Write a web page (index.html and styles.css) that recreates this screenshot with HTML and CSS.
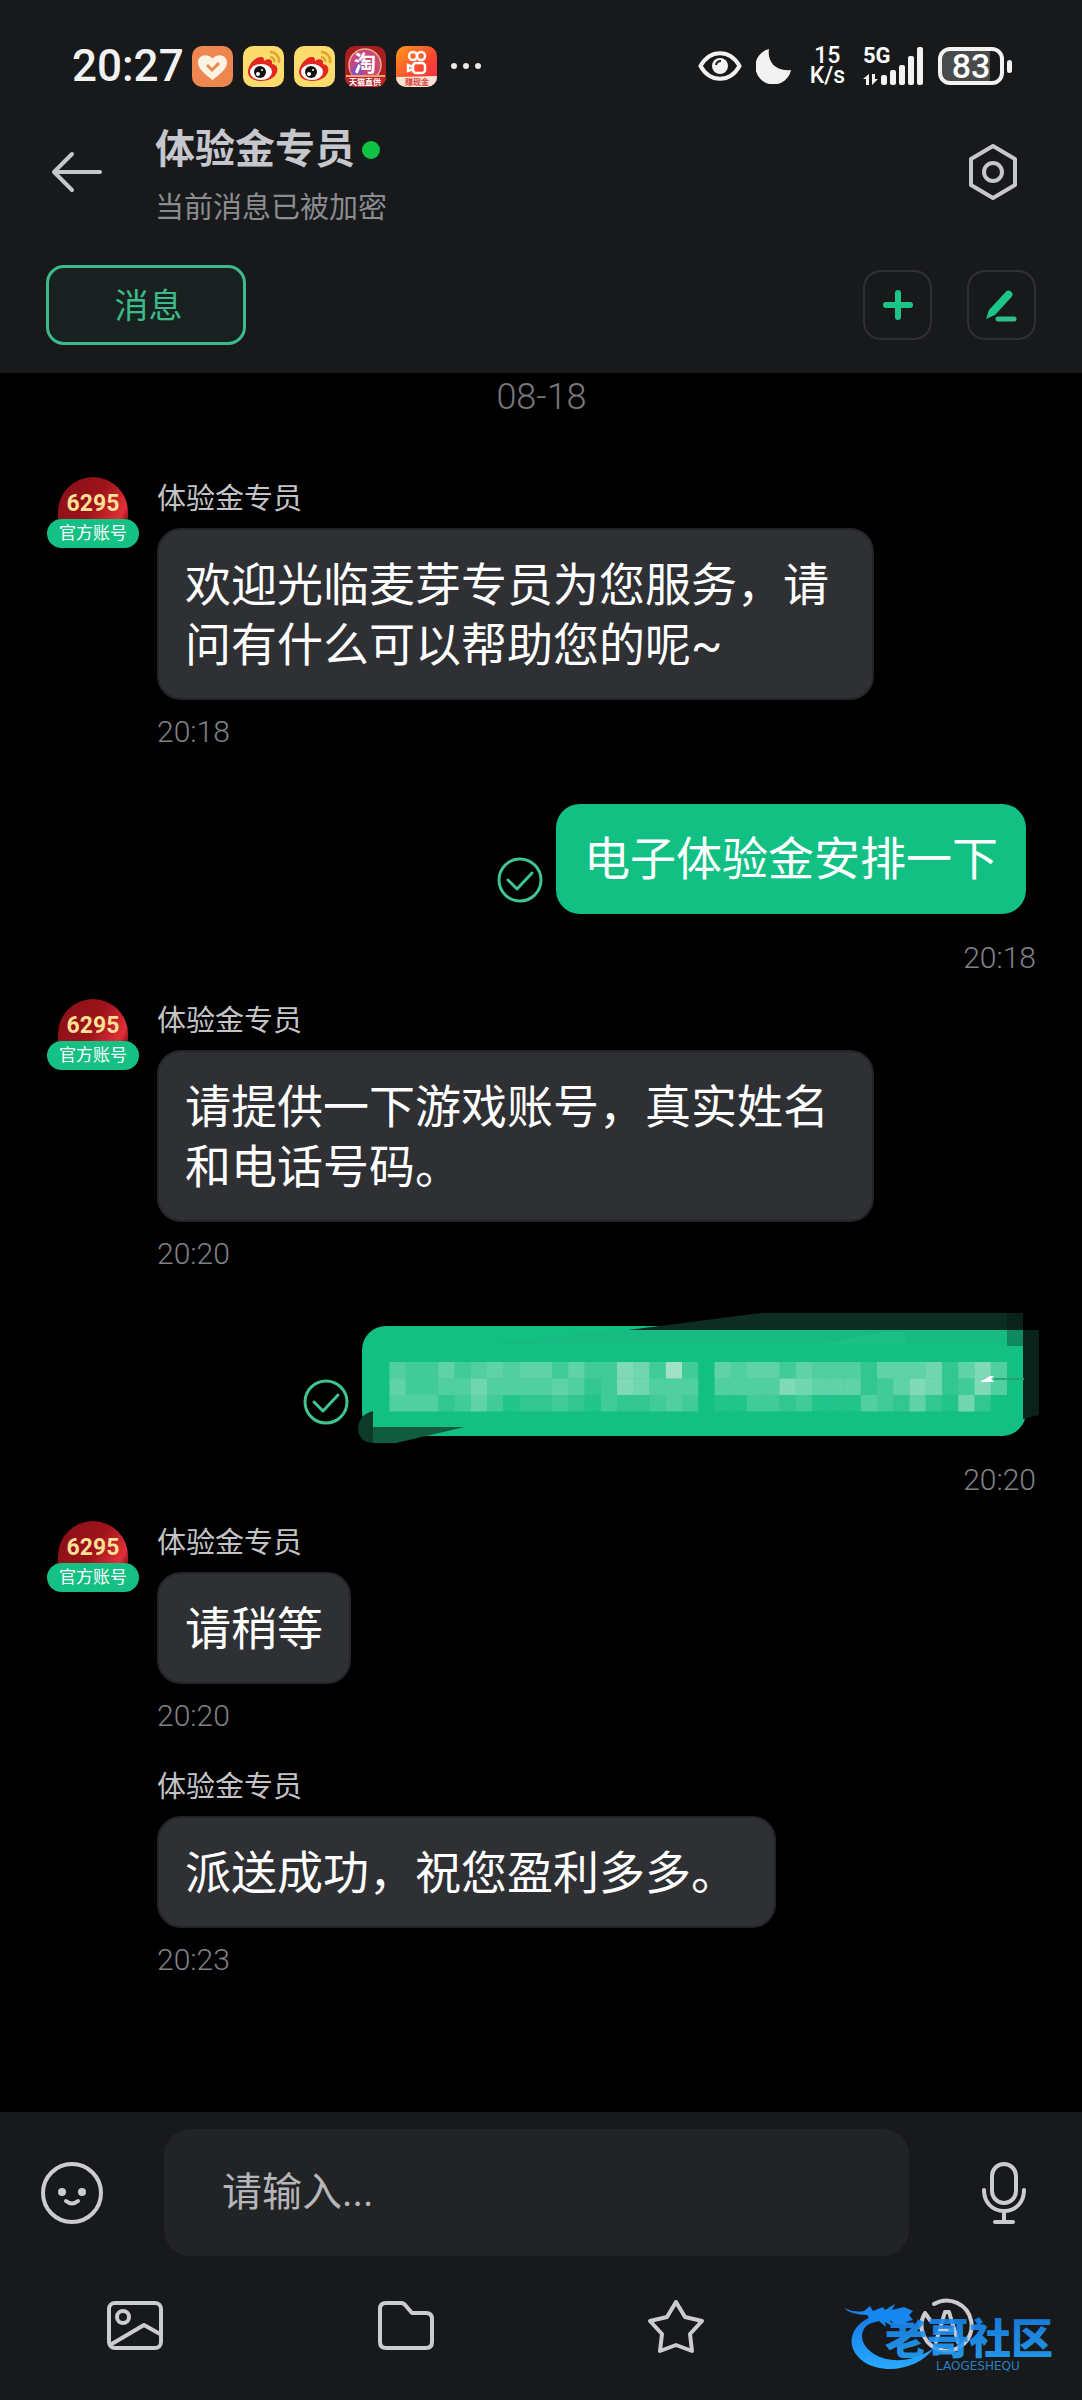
FILE: index.html
```html
<!DOCTYPE html>
<html lang="zh-CN">
<head>
    <meta charset="UTF-8">
    <meta name="viewport" content="width=device-width, initial-scale=1.0">
    <title>体验金专员</title>
    <link rel="stylesheet" href="styles.css">
</head>
<body>
    <header class="header">
        <div class="status-bar">
            <div class="status-left">
                <span class="clock">20:27</span>
                <div class="app-icons">
                    <svg width="41" height="41" viewBox="0 0 41 41">
                        <rect width="41" height="41" rx="10" fill="#ee8650"/>
                        <path d="M20.500 34C13 28 6 23 6 16.500C6 9 15 6.500 20.500 12.500C26 6.500 35 9 35 16.500C35 23 28 28 20.500 34Z" fill="#fdf3e2"/>
                        <path d="M15 19l5 5 7-7" fill="none" stroke="#e58a50" stroke-width="3"/>
                    </svg>
                    <svg width="41" height="41" viewBox="0 0 41 41">
                        <rect width="41" height="41" rx="10" fill="#fbdc6c"/>
                        <path d="M5 26C5 19 12 11 18 11c3 0 3 2 3 4 4-3 9-2 8 3 5 1 6 4 5 8-2 6-9 9-16 9C10 35 5 31 5 26Z" fill="#e3261f"/>
                        <ellipse cx="18" cy="26" rx="11" ry="8" fill="#fff"/>
                        <circle cx="17" cy="26" r="6" fill="#111"/>
                        <circle cx="15" cy="28" r="2" fill="#fff"/>
                        <circle cx="19" cy="24" r="1" fill="#fff"/>
                        <path d="M27 6c6 0 10 5 9 11M27 11c3 0 5 3 4 5" fill="none" stroke="#e2a532" stroke-width="2.500"/>
                    </svg>
                    <svg width="41" height="41" viewBox="0 0 41 41">
                        <rect width="41" height="41" rx="10" fill="#fbdc6c"/>
                        <path d="M5 26C5 19 12 11 18 11c3 0 3 2 3 4 4-3 9-2 8 3 5 1 6 4 5 8-2 6-9 9-16 9C10 35 5 31 5 26Z" fill="#e3261f"/>
                        <ellipse cx="18" cy="26" rx="11" ry="8" fill="#fff"/>
                        <circle cx="17" cy="26" r="6" fill="#111"/>
                        <circle cx="15" cy="28" r="2" fill="#fff"/>
                        <circle cx="19" cy="24" r="1" fill="#fff"/>
                        <path d="M27 6c6 0 10 5 9 11M27 11c3 0 5 3 4 5" fill="none" stroke="#e2a532" stroke-width="2.500"/>
                    </svg>
                    <svg width="41" height="41" viewBox="0 0 41 41">
                        <rect width="41" height="41" rx="10" fill="#a81f22"/>
                        <circle cx="20" cy="19" r="16" fill="#c9487c" stroke="#efb08c" stroke-width="1.500"/>
                        <path d="M5 24a16 16 0 0 0 13 11V12z" fill="#8e4fae"/>
                        <path d="M0 29h41v2a10 10 0 0 1-10 10H10A10 10 0 0 1 0 31z" fill="#b9262a"/>
                        <path d="M1 30h39" stroke="#f0a070" stroke-width="2"/>
                        <text x="20" y="25" class="icon-char">淘</text>
                        <text x="20" y="39" class="icon-tiny">天猫直供</text>
                    </svg>
                    <svg width="41" height="41" viewBox="0 0 41 41">
                        <defs>
                            <linearGradient id="ks" x1="0" y1="0" x2="1" y2="1">
                                <stop offset="0" stop-color="#ff9a1c"/>
                                <stop offset="0.600" stop-color="#fa4332"/>
                                <stop offset="1" stop-color="#ee2c50"/>
                            </linearGradient>
                        </defs>
                        <rect width="41" height="41" rx="10" fill="url(#ks)"/>
                        <g fill="none" stroke="#fff" stroke-width="2.500">
                            <circle cx="17" cy="10" r="4"/>
                            <circle cx="25" cy="10" r="4"/>
                            <rect x="17" y="17" width="12" height="10" rx="3"/>
                            <path d="M17 21l-5-2v6l5-2"/>
                        </g>
                        <path d="M0 31l41-1v1a10 10 0 0 1-10 10H10A10 10 0 0 1 0 31z" fill="#fbe3d3"/>
                        <text x="21" y="39" class="icon-tiny red">赚现金</text>
                    </svg>
                </div>
                <svg width="30" height="8" viewBox="0 0 30 8" fill="#e8e8e8">
                    <circle cx="3" cy="4" r="3"/><circle cx="15" cy="4" r="3"/><circle cx="27" cy="4" r="3"/>
                </svg>
            </div>
            <div class="status-right">
                <svg width="44" height="30" viewBox="0 0 44 30">
                    <path d="M2.500 15C12-2 32-2 41.500 15C32 32 12 32 2.500 15Z" fill="none" stroke="#f2f2f2" stroke-width="4"/>
                    <circle cx="22" cy="15" r="8" fill="#f2f2f2"/>
                    <path d="M18 14a5 5 0 0 1 5-4" fill="none" stroke="#17181a" stroke-width="2"/>
                </svg>
                <svg width="36" height="36" viewBox="0 0 36 36">
                    <path d="M13 1C11 13 19 24 35 22A18 18 0 1 1 13 1Z" fill="#f2f2f2"/>
                </svg>
                <div class="speed"><span>15</span><span>K/s</span></div>
                <div class="signal">
                    <span class="network">5G</span>
                    <svg width="61" height="38" viewBox="0 0 61 38" fill="#f2f2f2">
                        <rect x="18" y="28" width="6" height="10" rx="2"/>
                        <rect x="27" y="23" width="6" height="15" rx="2"/>
                        <rect x="36" y="18" width="6" height="20" rx="2"/>
                        <rect x="45" y="9" width="6" height="29" rx="2"/>
                        <rect x="54" y="0" width="6" height="38" rx="2"/>
                        <path d="M6 27v11H3v-6H0zM9 27v11l6-6h-3v-5z"/>
                    </svg>
                </div>
                <div class="battery"><span>83</span></div>
            </div>
        </div>

        <div class="title-row">
            <button class="icon-btn" aria-label="返回">
                <svg width="52" height="42" viewBox="0 0 52 42" fill="none" stroke="#c6c7cc" stroke-width="4" stroke-linecap="round" stroke-linejoin="round">
                    <path d="M21 3L3 21l18 18M3 21h46"/>
                </svg>
            </button>
            <div class="contact">
                <h1>体验金专员<i class="online"></i></h1>
                <p>当前消息已被加密</p>
            </div>
            <button class="icon-btn" aria-label="设置">
                <svg width="50" height="58" viewBox="0 0 50 58" fill="none" stroke="#c6c7cc" stroke-width="4">
                    <path d="M25 3L47 16v26L25 55L3 42V16Z" stroke-linejoin="round"/>
                    <circle cx="25" cy="29" r="9"/>
                </svg>
            </button>
        </div>

        <div class="tab-row">
            <button class="tab">消息</button>
            <div class="actions">
                <button class="square-btn" aria-label="添加">
                    <svg width="30" height="30" viewBox="0 0 30 30" stroke="#1dc487" stroke-width="6" stroke-linecap="round">
                        <path d="M15 3v24M3 15h24"/>
                    </svg>
                </button>
                <button class="square-btn" aria-label="编辑">
                    <svg width="34" height="34" viewBox="0 0 34 34">
                        <path d="M21 3.500a4 4 0 0 1 6 5L10 27 1 31 4 22Z" fill="#1dc487"/>
                        <path d="M13 31h16" stroke="#2fbd89" stroke-width="5" stroke-linecap="round"/>
                    </svg>
                </button>
            </div>
        </div>
    </header>

    <main class="chat">
        <div class="date">08-18</div>

        <div class="message received">
            <div class="avatar"><div class="face">6295</div><span class="badge">官方账号</span></div>
            <div class="content">
                <div class="name">体验金专员</div>
                <div class="bubble">欢迎光临麦芽专员为您服务，请问有什么可以帮助您的呢~</div>
                <div class="time">20:18</div>
            </div>
        </div>

        <div class="message sent">
            <div class="bubble-row">
                <svg class="check" width="46" height="46" viewBox="0 0 46 46" fill="none" stroke="#3ec592" stroke-width="3">
                    <circle cx="23" cy="23" r="21"/>
                    <path d="M11 23l9 9 15-16" stroke-linecap="round" stroke-linejoin="round"/>
                </svg>
                <div class="bubble">电子体验金安排一下</div>
            </div>
            <div class="time">20:18</div>
        </div>

        <div class="message received">
            <div class="avatar"><div class="face">6295</div><span class="badge">官方账号</span></div>
            <div class="content">
                <div class="name">体验金专员</div>
                <div class="bubble">请提供一下游戏账号，真实姓名和电话号码。</div>
                <div class="time">20:20</div>
            </div>
        </div>

        <div class="message sent">
            <div class="bubble-row">
                <svg class="check" width="46" height="46" viewBox="0 0 46 46" fill="none" stroke="#3ec592" stroke-width="3">
                    <circle cx="23" cy="23" r="21"/>
                    <path d="M11 23l9 9 15-16" stroke-linecap="round" stroke-linejoin="round"/>
                </svg>
                <div class="bubble masked">
                    <svg class="smear" width="700" height="150" viewBox="-10 -20 700 150">
                        <path d="M266 4L399-13H661V4Z" fill="#0c2e22"/>
                        <path d="M645-13h16V4h-16z" fill="#0a231a"/>
                        <path d="M645 4h16v16h-16z" fill="#0f8a60"/>
                        <path d="M661 4h16v85l-16 4z" fill="#09231a"/>
                        <path d="M120 19L250 4h395v15z" fill="#18b57d" opacity="0.500"/>
                        <path d="M461 18l60-12h20l5 12z" fill="#22c58c" opacity="0.500"/>
                        <path d="M-4 101q2-13 15-16v32Q-4 116-4 101z" fill="#0c3c29"/>
                        <path d="M11 101h92l-39 9-30 7H11z" fill="#115b3f"/>
                        <g id="mosaic"></g>
                        <path d="M618 56l10-6h4l-3 3 3 3z" fill="#fff"/>
                        <path d="M632 53h30" stroke="#25a677" stroke-width="2"/>
                    </svg>
                </div>
            </div>
            <div class="time">20:20</div>
        </div>

        <div class="message received">
            <div class="avatar"><div class="face">6295</div><span class="badge">官方账号</span></div>
            <div class="content">
                <div class="name">体验金专员</div>
                <div class="bubble">请稍等</div>
                <div class="time">20:20</div>
            </div>
        </div>

        <div class="message received">
            <div class="avatar"></div>
            <div class="content">
                <div class="name">体验金专员</div>
                <div class="bubble">派送成功，祝您盈利多多。&nbsp;</div>
                <div class="time">20:23</div>
            </div>
        </div>
    </main>

    <footer class="footer">
        <div class="input-row">
            <button class="icon-btn" aria-label="表情">
                <svg width="62" height="62" viewBox="0 0 62 62" fill="none" stroke="#cbccd2" stroke-width="4">
                    <circle cx="31" cy="31" r="29"/>
                    <circle cx="21" cy="30" r="4" fill="#cbccd2" stroke="none"/>
                    <circle cx="41" cy="30" r="4" fill="#cbccd2" stroke="none"/>
                    <path d="M25 39q6 5 12 0" stroke-linecap="round"/>
                </svg>
            </button>
            <input class="message-input" type="text" placeholder="请输入..." aria-label="请输入">
            <button class="icon-btn" aria-label="语音">
                <svg width="46" height="64" viewBox="0 0 46 64" fill="none" stroke="#cbccd2" stroke-width="4" stroke-linecap="round">
                    <rect x="11" y="3" width="24" height="39" rx="12"/>
                    <path d="M3 29c0 12 8 21 20 21s20-9 20-21M23 50v11M14 61h18"/>
                </svg>
            </button>
        </div>
        <div class="toolbar">
            <button class="icon-btn" aria-label="图片">
                <svg width="58" height="56" viewBox="0 0 58 56" fill="none" stroke="#cbccd2" stroke-width="4" stroke-linejoin="round">
                    <rect x="3" y="5" width="52" height="45" rx="6"/>
                    <circle cx="17" cy="19" r="6"/>
                    <path d="M4 47L38 27l16 9"/>
                </svg>
            </button>
            <button class="icon-btn" aria-label="文件">
                <svg width="58" height="56" viewBox="0 0 58 56" fill="none" stroke="#cbccd2" stroke-width="4" stroke-linejoin="round">
                    <path d="M9 5h15q3 0 5 3l6 7h14q6 0 6 6v23q0 6-6 6H9q-6 0-6-6V11q0-6 6-6z"/>
                </svg>
            </button>
            <button class="icon-btn" aria-label="收藏">
                <svg width="58" height="56" viewBox="0 0 58 56" fill="none" stroke="#cbccd2" stroke-width="4" stroke-linejoin="round">
                    <path d="M29 4l9 15 17 4-12 13 2 17-16-6-16 6 2-17L3 23l17-4z"/>
                </svg>
            </button>
            <button class="icon-btn" aria-label="翻译">
                <svg width="58" height="56" viewBox="0 0 58 56" fill="none" stroke="#cbccd2" stroke-width="4" stroke-linecap="round" stroke-linejoin="round">
                    <path d="M16 6A25 25 0 1 1 7 15M3 30Q3 21 7 15L12 22"/>
                    <path d="M18 44l9-30h4l9 30M23 32h12"/>
                </svg>
            </button>
        </div>
        <svg class="watermark" width="230" height="84" viewBox="0 0 230 84">
            <defs>
                <linearGradient id="blue" x1="0" y1="0" x2="0" y2="1">
                    <stop offset="0" stop-color="#1479e6"/>
                    <stop offset="1" stop-color="#28aaff"/>
                </linearGradient>
            </defs>
            <path d="M36 17C8 26 4 50 24 64C46 78 80 70 94 50C74 64 50 66 34 56C16 44 18 26 42 20Z" fill="url(#blue)"/>
            <path d="M4 10q10 5 20 3l6-5 3 5 10-4 2 3 10-6-3 6 12-3 9 4-4 4 4 5-8 2 6 3-16-1-5-4 2 6-7-4 1 5-7-6-14 4q6-8 2-10-16 0-23-7z" fill="#1687ee"/>
            <text x="45" y="56" class="mark-name">老哥社区</text>
            <text x="96" y="72" class="mark-sub">LAOGESHEQU</text>
        </svg>
    </footer>

    <script>
        // white level of each block, 0 = plain bubble colour
        const rows = [
            '43353454553533763930545535444255562574',
            '53344644445423764440444476555235762374',
            '44423531223213223430113323111432521620'
        ];
        const mosaic = document.getElementById('mosaic');
        const size = 16.25;

        rows.forEach((row, y) => {
            [...row].forEach((level, x) => {
                const block = document.createElementNS('http://www.w3.org/2000/svg', 'rect');
                block.setAttribute('x', 27.5 + x * size);
                block.setAttribute('y', 36 + y * 16.5);
                block.setAttribute('width', size);
                block.setAttribute('height', 16.5);
                block.setAttribute('fill', '#d8eee0');
                block.setAttribute('opacity', level * 0.08);
                mosaic.appendChild(block);
            });
        });
    </script>
</body>
</html>
```

FILE: styles.css
```css
* {
    box-sizing: border-box;
}
body {
    margin: 0;
    min-height: 100vh;
    display: flex;
    flex-direction: column;
    background-color: #000;
    color: #fff;
    font-family: Roboto, "Noto Sans CJK SC", sans-serif;
}
svg {
    display: block;
    flex-shrink: 0;
}
button {
    font-family: inherit;
    background: none;
    border: none;
    padding: 0;
    cursor: pointer;
}

/* header */
.header {
    background-color: #18191b;
    padding-bottom: 28px;
}
.status-bar {
    display: flex;
    justify-content: space-between;
    align-items: center;
    height: 110px;
    padding: 22px 70px 0 72px;
}
.status-left, .status-right, .app-icons {
    display: flex;
    align-items: center;
}
.clock {
    font-size: 44px;
    font-weight: 500;
    line-height: 44px;
    color: #f2f2f2;
    margin-right: 8px;
}
.app-icons {
    gap: 10px;
    margin-right: 14px;
}
.icon-char {
    font-size: 22px;
    font-weight: 700;
    fill: #fff;
    text-anchor: middle;
}
.icon-tiny {
    font-size: 8px;
    font-weight: 700;
    fill: #fff;
    text-anchor: middle;
}
.red {
    fill: #d8413a;
}
.status-right {
    gap: 14px;
}
.speed {
    display: flex;
    flex-direction: column;
    align-items: center;
    font-size: 23px;
    font-weight: 500;
    line-height: 20px;
    margin: 0 4px;
}
.signal {
    position: relative;
}
.network {
    position: absolute;
    top: 0;
    left: 0;
    font-size: 22px;
    font-weight: 700;
    line-height: 18px;
}
.battery {
    position: relative;
    width: 66px;
    height: 38px;
    margin-right: 8px;
    border: 4px solid #f2f2f2;
    border-radius: 12px;
    background: linear-gradient(to right, #4a4b4d 83%, #18191b 83%);
    text-align: center;
    font-size: 34px;
    font-weight: 500;
    line-height: 31px;
}
.battery::after {
    content: "";
    position: absolute;
    right: -12px;
    top: 9px;
    width: 5px;
    height: 13px;
    border-radius: 3px;
    background-color: #f2f2f2;
}
.title-row {
    display: flex;
    align-items: center;
    height: 124px;
    padding: 0 64px 0 51px;
}
.contact {
    flex: 1;
    margin-left: 52px;
    padding-top: 3px;
}
.contact h1 {
    display: flex;
    align-items: center;
    gap: 7px;
    margin: 0 0 10px;
    font-size: 40px;
    font-weight: 700;
    line-height: 58px;
    color: #c6c7cc;
}
.online {
    width: 18px;
    height: 18px;
    border-radius: 50%;
    background-color: #0fc144;
}
.contact p {
    margin: 0;
    font-size: 29px;
    line-height: 38px;
    color: #8b8c8f;
}
.tab-row {
    display: flex;
    justify-content: space-between;
    align-items: center;
    padding: 31px 46px 0;
}
.tab {
    width: 200px;
    height: 80px;
    padding: 0 0 3px 5px;
    border: 3px solid #3dba8b;
    border-radius: 18px;
    background-color: #18211f;
    color: #3dba8b;
    font-size: 34px;
}
.actions {
    display: flex;
    gap: 35px;
}
.square-btn {
    display: flex;
    align-items: center;
    justify-content: center;
    width: 69px;
    height: 70px;
    border: 2px solid #2f3033;
    border-radius: 18px;
}

/* messages */
.chat {
    flex: 1;
    padding: 0 46px 60px 47px;
}
.date {
    margin-bottom: 55px;
    text-align: center;
    font-size: 36px;
    font-weight: 300;
    line-height: 48px;
    color: #77787a;
}
.message {
    display: flex;
}
.received + .received {
    margin-top: 28px;
}
.sent {
    flex-direction: column;
    align-items: flex-end;
    margin: 52px 0 20px;
}
.avatar {
    display: flex;
    flex-direction: column;
    align-items: center;
    flex-shrink: 0;
    width: 92px;
    margin-right: 18px;
}
.face {
    width: 70px;
    height: 42px;
    margin-top: 1px;
    border-radius: 35px 35px 0 0;
    background: linear-gradient(120deg, #d88a7a 0%, #8d1118 14%, #9c1319 55%, #e0303a 90%, #8d1118 100%);
    font-size: 23px;
    font-weight: 700;
    line-height: 54px;
    text-align: center;
    color: #ffdf94;
}
.badge {
    width: 92px;
    height: 29px;
    border-radius: 15px;
    background-color: #14c083;
    font-size: 17px;
    line-height: 29px;
    text-align: center;
}
.name {
    padding-top: 2px;
    margin-bottom: 8px;
    font-size: 29px;
    line-height: 42px;
    color: #c4c4c6;
}
.bubble {
    width: fit-content;
    max-width: 717px;
    padding: 25px 26px 23px;
    border: 2px solid #242528;
    border-radius: 24px;
    background-color: #2f3034;
    font-size: 46px;
    line-height: 60px;
}
.time {
    margin-top: 12px;
    font-size: 30px;
    font-weight: 300;
    line-height: 40px;
    color: #808185;
}
.bubble-row {
    display: flex;
    align-items: flex-end;
    gap: 13px;
    padding-right: 10px;
}
.check {
    margin-bottom: 11px;
}
.sent .bubble {
    padding: 25px 28px;
    border: none;
    background-color: #12c084;
}
.sent .time {
    margin-top: 24px;
}
.sent .masked {
    position: relative;
    width: 664px;
    height: 110px;
}
.smear {
    position: absolute;
    top: -20px;
    left: -10px;
}

/* footer */
.footer {
    position: relative;
    padding-top: 17px;
    background-color: #18191b;
}
.input-row {
    display: flex;
    align-items: center;
    padding: 0 55px 0 41px;
}
.message-input {
    flex: 1;
    min-width: 0;
    height: 127px;
    margin: 0 72px 0 61px;
    padding: 0 58px;
    border: none;
    border-radius: 26px;
    background-color: #222325;
    color: #fff;
    font-family: inherit;
    font-size: 40px;
}
.message-input::placeholder {
    color: #b5b6b9;
}
.toolbar {
    display: grid;
    grid-template-columns: repeat(4, 1fr);
    justify-items: center;
    padding: 42px 0 46px;
}
.watermark {
    position: absolute;
    right: 12px;
    bottom: 18px;
}
.mark-name {
    font-family: "Noto Sans CJK SC", sans-serif;
    font-size: 42px;
    font-weight: 900;
    fill: url(#blue);
    opacity: 0.9;
}
.mark-sub {
    font-family: "DejaVu Sans", sans-serif;
    font-size: 12px;
    fill: #2a7fc0;
}
```
